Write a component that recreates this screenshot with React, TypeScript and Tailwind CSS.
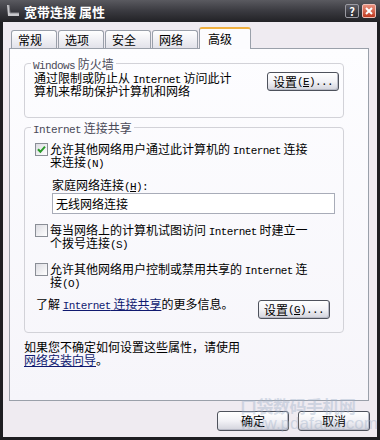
import type { ReactNode } from 'react';

// Latin runs in the dialog are drawn by SimSun's half-width glyphs (6px each)
function L({ children }: { children: ReactNode }) {
  return <span className="font-['Liberation_Mono',monospace] text-[11px] leading-[8px] tracking-[-0.6px]">{children}</span>;
}

function XpButton({ children, className = '' }: { children: ReactNode; className?: string }) {
  return (
    <button
      type="button"
      className={`flex h-[19px] w-[72px] shrink-0 items-center justify-center rounded-[3px] border border-[#4e525c] bg-linear-to-b from-white via-[#f2f2f6] to-[#d2d3dc] text-[12px] leading-none text-black shadow-[inset_-1px_-1px_0_#b8bac6] ${className}`}
    >
      {children}
    </button>
  );
}

function CheckBox({ checked = false }: { checked?: boolean }) {
  return (
    <span className="mt-[1px] flex h-[13px] w-[13px] shrink-0 items-center justify-center border border-[#8a8e96] bg-linear-to-br from-[#dcdce2] to-white">
      {checked && (
        <svg width="9" height="9" viewBox="0 0 9 9">
          <path d="M1 4.2 L3.4 6.8 L8 1.6" fill="none" stroke="#2a9a2a" strokeWidth="2" />
        </svg>
      )}
    </span>
  );
}

function GroupBox({ title, className, children }: { title: ReactNode; className: string; children: ReactNode }) {
  return (
    <fieldset className={`ml-[14px] w-[320px] rounded-[4px] border border-[#d2d2d8] ${className}`}>
      <legend className="ml-[6px] px-[2px] text-[12px] leading-[13px] text-[#4a4a58]">{title}</legend>
      {children}
    </fieldset>
  );
}

export default function App() {
  return (
    <div className="relative flex h-[440px] w-[380px] flex-col overflow-hidden bg-[#1e1e22] font-['Noto_Sans_CJK_SC',sans-serif] text-[12px] text-black">
      {/* title bar */}
      <div className="flex h-[22px] items-center bg-linear-to-b from-[#5a5a60] via-[#3a3a40] to-[#222226] pl-[5px] pr-[4px]">
        <svg width="16" height="14" viewBox="0 0 16 14" className="mr-[3px]">
          <path d="M2 1 L4 1 L5 9 L14 9 L14 12 L3 12 Z" fill="#c8c8cc" />
          <path d="M4 1 L5 9 L14 9" fill="none" stroke="#8a8a90" strokeWidth="1" />
        </svg>
        <span className="text-[13px] font-bold leading-none text-white">宽带连接 属性</span>
        <span className="ml-auto flex h-[14px] w-[14px] items-center justify-center rounded-[2px] border border-[#9a9aa2] bg-linear-to-b from-[#5c5c64] to-[#2a2a30] text-[11px] font-bold leading-none text-white">
          ?
        </span>
        <span className="ml-[3px] flex h-[14px] w-[14px] items-center justify-center rounded-[2px] border border-[#f0c0b8] bg-linear-to-b from-[#e8907e] to-[#c0381e]">
          <svg width="8" height="8" viewBox="0 0 8 8">
            <path d="M1 1 L7 7 M7 1 L1 7" stroke="white" strokeWidth="2" />
          </svg>
        </span>
      </div>

      {/* body */}
      <div className="mx-[3px] mb-[3px] flex flex-1 flex-col bg-[#efebf1]">
        {/* tabs */}
        <div className="relative z-10 ml-[8px] flex h-[26px] items-end gap-[1px] pt-[5px]">
          {['常规', '选项', '安全', '网络'].map((t) => (
            <div
              key={t}
              className="flex h-[18px] w-[46px] items-center rounded-t-[3px] border border-b-0 border-[#9aa0aa] bg-linear-to-b from-white to-[#e2e2ea] pl-[6px] leading-none"
            >
              {t}
            </div>
          ))}
          <div className="-mb-px flex h-[22px] w-[52px] items-center rounded-t-[3px] border-x border-t-2 border-[#9aa0aa] border-t-[#f0b040] bg-[#fcfcfe] pl-[8px] leading-none">
            高级
          </div>
        </div>

        {/* tab panel */}
        <div className="ml-[6px] flex h-[353px] w-[360px] flex-col border border-[#9aa0aa] bg-linear-to-b from-[#fdfdff] to-[#f6f5fa] pt-[8px]">
          <GroupBox title={<><L>Windows</L> 防火墙</>} className="h-[61px]">
            <div className="flex items-start pl-[9px] pr-[4px] pt-[1px]">
              <p className="leading-[13px]">
                通过限制或防止从 <L>Internet</L> 访问此计
                <br />
                算机来帮助保护计算机和网络
              </p>
              <XpButton className="ml-auto mt-[1px]">
                设置<L>(<u>E</u>)...</L>
              </XpButton>
            </div>
          </GroupBox>

          <GroupBox title={<><L>Internet</L> 连接共享</>} className="mt-[3px] h-[212px]">
            <div className="flex flex-col pl-[10px]">
              <div className="mt-[8px] flex items-start gap-[2px]">
                <CheckBox checked />
                <p className="leading-[13px]">
                  允许其他网络用户通过此计算机的 <L>Internet</L> 连接
                  <br />
                  来连接<L>(N)</L>
                </p>
              </div>
              <p className="ml-[17px] mt-[10px] leading-[13px]">
                家庭网络连接<L>(<u>H</u>):</L>
              </p>
              <div className="ml-[17px] mt-[2px] flex h-[21px] w-[283px] items-center border border-[#a8acb8] bg-white pl-[3px]">
                无线网络连接
              </div>
              <div className="mt-[9px] flex items-start gap-[2px]">
                <CheckBox />
                <p className="leading-[13px]">
                  每当网络上的计算机试图访问 <L>Internet</L> 时建立一
                  <br />
                  个拨号连接<L>(S)</L>
                </p>
              </div>
              <div className="mt-[13px] flex items-start gap-[2px]">
                <CheckBox />
                <p className="leading-[13px]">
                  允许其他网络用户控制或禁用共享的 <L>Internet</L> 连
                  <br />
                  接<L>(O)</L>
                </p>
              </div>
              <div className="mt-[9px] flex items-start pl-[1px] pr-[13px]">
                <p className="leading-[13px]">
                  了解 <span className="text-[#101a70] underline"><L>Internet</L> 连接共享</span>的更多信息。
                </p>
                <XpButton className="ml-auto mt-[3px]">
                  设置<L>(<u>G</u>)...</L>
                </XpButton>
              </div>
            </div>
          </GroupBox>

          <p className="ml-[14px] mt-[7px] leading-[13px]">
            如果您不确定如何设置这些属性，请使用
            <br />
            <span className="text-[#101a70] underline">网络安装向导</span>。
          </p>
        </div>

        {/* dialog buttons */}
        <div className="mt-[10px] flex justify-end gap-[9px] pr-[7px]">
          <XpButton className="h-[20px]">确定</XpButton>
          <XpButton className="h-[20px]">取消</XpButton>
        </div>
      </div>

      {/* site watermark */}
      <div className="pointer-events-none absolute left-[240px] top-[397px] flex flex-col leading-none text-[#9fb0c8] opacity-40">
        <span className="text-[17px] font-bold tracking-[-0.5px]">口袋数码手机网</span>
        <span className="mt-[1px] font-['Liberation_Sans',sans-serif] text-[17px]">www.pdafans.com</span>
      </div>
    </div>
  );
}
